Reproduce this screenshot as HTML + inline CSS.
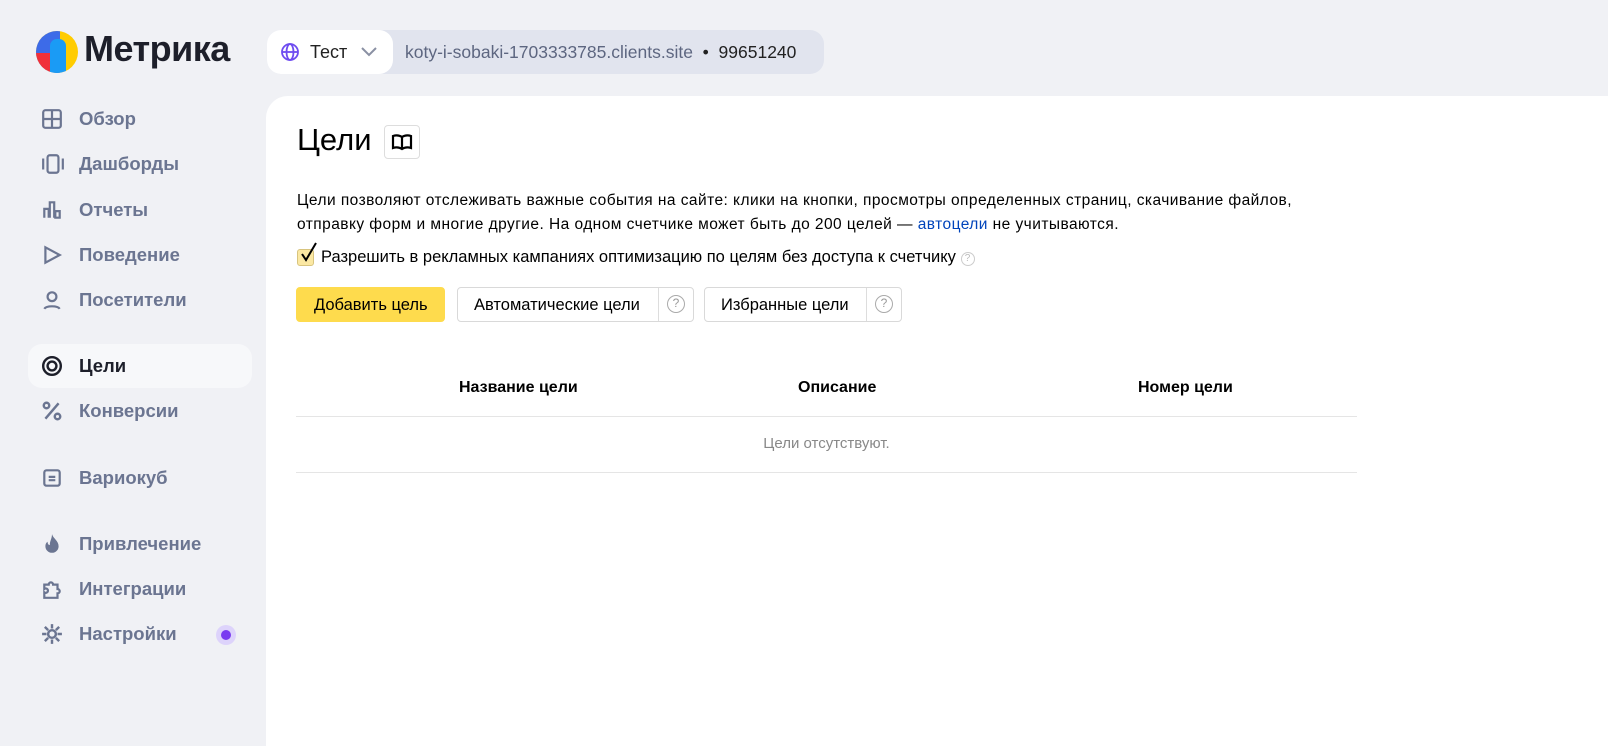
<!DOCTYPE html>
<html><head><meta charset="utf-8"><style>
*{box-sizing:border-box;margin:0;padding:0}
body{width:1608px;height:746px;background:#f0f1f5;font-family:"Liberation Sans",sans-serif;position:relative;overflow:hidden}
.abs{position:absolute}
.logo{left:36px;top:31px;width:42px;height:42px;border-radius:50%;overflow:hidden;background:#fc0}
.nav{left:28px;width:224px;height:44px;border-radius:14px;font-size:18.5px;font-weight:bold;color:#6b7591}
.nav span{position:absolute;left:51px;top:11px}
.nav svg{position:absolute;left:13px;top:11px}
.main{left:266px;top:96px;right:0;bottom:0;background:#fff;border-top-left-radius:22px}
.btn{position:absolute;top:287px;height:35px;border:1px solid #d9d9d9;border-radius:4px;font-size:16.5px;color:#000;background:#fff}
.q{display:inline-block;width:18px;height:18px;border:1.5px solid #aaa;border-radius:50%;color:#999;font-size:12px;text-align:center;line-height:15px}
</style></head><body>
<div class="abs logo">
<div class="abs" style="left:0;top:0;width:24px;height:42px;background:#3d6be8"></div>
<div class="abs" style="left:0;top:22px;width:14px;height:20px;background:#f0303a"></div>
<div class="abs" style="left:14px;top:8px;width:16px;height:34px;background:#1a9bf5;border-radius:7px 7px 0 0"></div>
</div>
<div class="abs" style="left:84px;top:28px;font-size:36px;font-weight:bold;color:#1d1f2a;letter-spacing:-0.5px">Метрика</div>
<div class="abs" style="left:267px;top:30px;width:557px;height:44px;background:#e1e4ee;border-radius:14px"></div>
<div class="abs" style="left:267px;top:30px;width:126px;height:44px;background:#fff;border-radius:14px"></div>
<svg class="abs" style="left:280px;top:42px" width="20" height="20" viewBox="0 0 20 20" fill="none" stroke="#6e4cf0" stroke-width="1.8"><circle cx="10" cy="10" r="8"/><ellipse cx="10" cy="10" rx="3.5" ry="8"/><path d="M2 10h16"/></svg>
<div class="abs" style="left:310px;top:42px;font-size:18px;color:#222">Тест</div>
<svg class="abs" style="left:360px;top:46px" width="18" height="12" viewBox="0 0 18 12" fill="none" stroke="#8a90a3" stroke-width="2"><path d="M2 2l7 7 7-7"/></svg>
<div class="abs" style="left:405px;top:42px;font-size:17.5px;color:#5d6680">koty-i-sobaki-1703333785.clients.site <span style="color:#222">&nbsp;•&nbsp; 99651240</span></div>

<div class="abs nav" style="top:97px"><svg width="22" height="22" viewBox="0 0 20 20" fill="none" stroke="#6b7591" stroke-width="2"><rect x="2" y="2" width="16" height="16" rx="2"/><path d="M10 2v16M2 10h16"/></svg><span>Обзор</span></div>
<div class="abs nav" style="top:142px"><svg width="24" height="22" viewBox="0 0 22 20" fill="none" stroke="#6b7591" stroke-width="2"><rect x="6" y="2" width="10" height="16" rx="2"/><path d="M2 5v10M20 5v10"/></svg><span>Дашборды</span></div>
<div class="abs nav" style="top:188px"><svg width="22" height="22" viewBox="0 0 20 20" fill="none" stroke="#6b7591" stroke-width="2"><path d="M3 17V9h4v8M8 17V3h4v14M13 17v-6h4v6z"/></svg><span>Отчеты</span></div>
<div class="abs nav" style="top:233px"><svg width="22" height="22" viewBox="0 0 20 20" fill="none" stroke="#6b7591" stroke-width="2"><path d="M4 3l13 7-13 7z"/></svg><span>Поведение</span></div>
<div class="abs nav" style="top:278px"><svg width="22" height="22" viewBox="0 0 20 20" fill="none" stroke="#6b7591" stroke-width="2"><circle cx="10" cy="7" r="4"/><path d="M3 18c2-3 12-3 14 0"/></svg><span>Посетители</span></div>
<div class="abs nav" style="top:344px;background:#f7f8fa;color:#1d1f2a"><svg width="22" height="22" viewBox="0 0 20 20" fill="none" stroke="#1d1f2a" stroke-width="2.2"><circle cx="10" cy="10" r="8"/><circle cx="10" cy="10" r="4"/></svg><span>Цели</span></div>
<div class="abs nav" style="top:389px"><svg width="22" height="22" viewBox="0 0 20 20" fill="none" stroke="#6b7591" stroke-width="2.2"><circle cx="5" cy="5" r="2.5"/><circle cx="15" cy="15" r="2.5"/><path d="M16 3L4 17"/></svg><span>Конверсии</span></div>
<div class="abs nav" style="top:456px"><svg width="22" height="22" viewBox="0 0 20 20" fill="none" stroke="#6b7591" stroke-width="2"><rect x="3" y="3" width="14" height="14" rx="2"/><path d="M7 9h6M7 12h6"/></svg><span>Вариокуб</span></div>
<div class="abs nav" style="top:522px"><svg width="22" height="22" viewBox="0 0 20 20"><path d="M10 1c1 4 6 6 6 11a6 6 0 01-12 0c0-3 2-4 2-4 0 2 1 3 2 3 0-4 2-6 2-10z" fill="#6b7591"/></svg><span>Привлечение</span></div>
<div class="abs nav" style="top:567px"><svg width="22" height="22" viewBox="0 0 20 20" fill="none" stroke="#6b7591" stroke-width="2"><path d="M3 6h4a2 2 0 114 0h4v4a2 2 0 110 4v4H3v-5a2 2 0 100-3z"/></svg><span>Интеграции</span></div>
<div class="abs nav" style="top:612px"><svg width="22" height="22" viewBox="0 0 20 20" fill="none" stroke="#6b7591" stroke-width="2.2"><circle cx="10" cy="10" r="3.5"/><path d="M10 1v4M10 15v4M1 10h4M15 10h4M3.5 3.5l3 3M13.5 13.5l3 3M3.5 16.5l3-3M13.5 6.5l3-3"/></svg><span>Настройки</span></div>
<div class="abs" style="left:216px;top:625px;width:20px;height:20px;border-radius:50%;background:#ddd3fb"></div>
<div class="abs" style="left:221px;top:630px;width:10px;height:10px;border-radius:50%;background:#7a3cf0"></div>

<div class="abs main"></div>
<div class="abs" style="left:297px;top:122px;font-size:31px;color:#000">Цели</div>
<div class="abs" style="left:384px;top:125px;width:36px;height:34px;border:1px solid #ddd;border-radius:4px"></div>
<svg class="abs" style="left:391px;top:133px" width="22" height="18" viewBox="0 0 22 18" fill="none" stroke="#000" stroke-width="2.2"><path d="M2 3c3-1 6-1 9 1c3-2 6-2 9-1v12c-3-1-6-1-9 1c-3-2-6-2-9-1zM11 4v12"/></svg>
<div class="abs" style="left:297px;top:189px;font-size:15.5px;line-height:24px;color:#000;width:1010px;letter-spacing:0.45px">Цели позволяют отслеживать важные события на сайте: клики на кнопки, просмотры определенных страниц, скачивание файлов, отправку форм и многие другие. На одном счетчике может быть до 200 целей — <span style="color:#04b">автоцели</span> не учитываются.</div>
<div class="abs" style="left:297px;top:249px;width:17px;height:17px;background:#fbe8a3;border:1px solid #d8c47e;border-radius:3px"></div>
<svg class="abs" style="left:299px;top:241px" width="20" height="22" viewBox="0 0 20 22" fill="none" stroke="#000" stroke-width="2"><path d="M3 13l4 6L17 2"/></svg>
<div class="abs" style="left:321px;top:248px;font-size:16.5px;color:#000">Разрешить в рекламных кампаниях оптимизацию по целям без доступа к счетчику <span class="q" style="width:14px;height:14px;font-size:10px;line-height:12px;border-width:1px;color:#bbb;border-color:#ccc;vertical-align:1px">?</span></div>
<div class="btn" style="left:296px;width:149px;background:#fedb4d;border-color:#fedb4d;padding:8px 0 0 17px">Добавить цель</div>
<div class="btn" style="left:457px;width:237px"><span style="position:absolute;left:16px;top:8px">Автоматические цели</span><div style="position:absolute;left:200px;top:0;bottom:0;border-left:1px solid #ddd"></div><span class="q" style="position:absolute;left:209px;top:7px">?</span></div>
<div class="btn" style="left:704px;width:198px"><span style="position:absolute;left:16px;top:8px">Избранные цели</span><div style="position:absolute;left:161px;top:0;bottom:0;border-left:1px solid #ddd"></div><span class="q" style="position:absolute;left:170px;top:7px">?</span></div>

<div class="abs" style="left:459px;top:379px;font-size:16px;font-weight:bold">Название цели</div>
<div class="abs" style="left:798px;top:379px;font-size:16px;font-weight:bold">Описание</div>
<div class="abs" style="left:1138px;top:379px;font-size:16px;font-weight:bold">Номер цели</div>
<div class="abs" style="left:296px;top:416px;width:1061px;border-top:1px solid #e5e5e5"></div>
<div class="abs" style="left:296px;top:435px;width:1061px;text-align:center;font-size:15px;color:#888">Цели отсутствуют.</div>
<div class="abs" style="left:296px;top:472px;width:1061px;border-top:1px solid #e5e5e5"></div>
</body></html>
